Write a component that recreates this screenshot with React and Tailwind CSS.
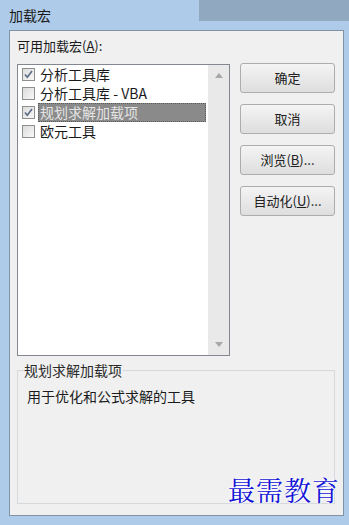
import React from "react";

const font = { fontFamily: '"Noto Sans CJK SC", "Liberation Sans", sans-serif' };

function Check({ checked }) {
  return (
    <div className="w-[13px] h-[13px] border border-[#8e8f8f] bg-gradient-to-br from-[#dcdcdc] to-[#f8f8f8] flex items-center justify-center shrink-0">
      {checked && (
        <svg width="11" height="11" viewBox="0 0 11 11">
          <path d="M2 5.5 L4.3 8.3 L9 2" fill="none" stroke="#5a6b84" strokeWidth="1.6" />
        </svg>
      )}
    </div>
  );
}

function Row({ checked, label, selected }) {
  return (
    <div className="h-[19px] flex items-center pl-[4px]">
      <Check checked={checked} />
      {selected ? (
        <div className="ml-[3px] h-[19px] w-[168px] bg-[#8a8a8a] border border-dotted border-[#5a5a5a] flex items-center pl-[1px] text-[14px] text-[#e4e4e4]">
          {label}
        </div>
      ) : (
        <div className="ml-[5px] text-[14px] text-[#1a1a1a] leading-[19px]">{label}</div>
      )}
    </div>
  );
}

function Btn({ children }) {
  return (
    <div className="h-[30px] w-[95px] border border-[#adadad] rounded-[3px] bg-gradient-to-b from-[#f4f4f4] to-[#dedede] flex items-center justify-center text-[13px] text-[#202020]">
      {children}
    </div>
  );
}

export default function App() {
  return (
    <div className="w-[349px] h-[525px] bg-[#aecbe9] relative overflow-hidden" style={font}>
      <div className="absolute right-0 top-0 w-[150px] h-[21px] bg-[#90a9c0]" />
      <div className="h-[30px] pl-[9px] pt-[6px] text-[14px] text-[#1b1b1b] leading-[18px] relative">加载宏</div>
      <div className="ml-[9px] mr-[5px] h-[486px] bg-[#f0f0f0] border border-[#7f92a6] flex flex-col">
        <div className="flex">
          <div className="flex flex-col pl-[7px]">
            <div className="h-[33px] pt-[6px] text-[13px] leading-[18px] text-[#1b1b1b]">
              可用加载宏(<span className="underline">A</span>):
            </div>
            <div className="w-[213px] h-[292px] border border-[#828790] bg-white flex">
              <div className="flex-1 pt-[0px]">
                <Row checked label="分析工具库" />
                <Row label="分析工具库 - VBA" />
                <Row checked label="规划求解加载项" selected />
                <Row label="欧元工具" />
              </div>
              <div className="w-[21px] bg-[#e9e9e9] flex flex-col justify-between items-center py-[8px]">
                <svg width="8" height="5" viewBox="0 0 8 5"><path d="M0 5 L4 0 L8 5 Z" fill="#a8a8a8" /></svg>
                <svg width="8" height="5" viewBox="0 0 8 5"><path d="M0 0 L4 5 L8 0 Z" fill="#a8a8a8" /></svg>
              </div>
            </div>
          </div>
          <div className="ml-[10px] pt-[32px] flex flex-col gap-[11px]">
            <Btn>确定</Btn>
            <Btn>取消</Btn>
            <Btn>浏览(<span className="underline">B</span>)...</Btn>
            <Btn>自动化(<span className="underline">U</span>)...</Btn>
          </div>
        </div>
        <div className="mt-[14px] ml-[7px] w-[318px] h-[134px] border border-[#d5d9dc] relative">
          <div className="absolute left-[6px] -top-[11px] bg-[#f0f0f0] pr-[1px] text-[14px] leading-[20px] text-[#2a2a2a]">规划求解加载项</div>
          <div className="pl-[9px] pt-[15px] text-[14px] leading-[20px] text-[#1b1b1b]">用于优化和公式求解的工具</div>
          <div
            className="absolute right-[-6px] bottom-[-4px] text-[27px] leading-[34px] text-[#1414d6] tracking-[1px]"
            style={{ fontFamily: '"Noto Serif CJK SC", "Noto Sans CJK SC", serif', textShadow: "0 0 2px #fff, 0 0 2px #fff, 0 0 3px #fff" }}
          >
            最需教育
          </div>
        </div>
      </div>
    </div>
  );
}
